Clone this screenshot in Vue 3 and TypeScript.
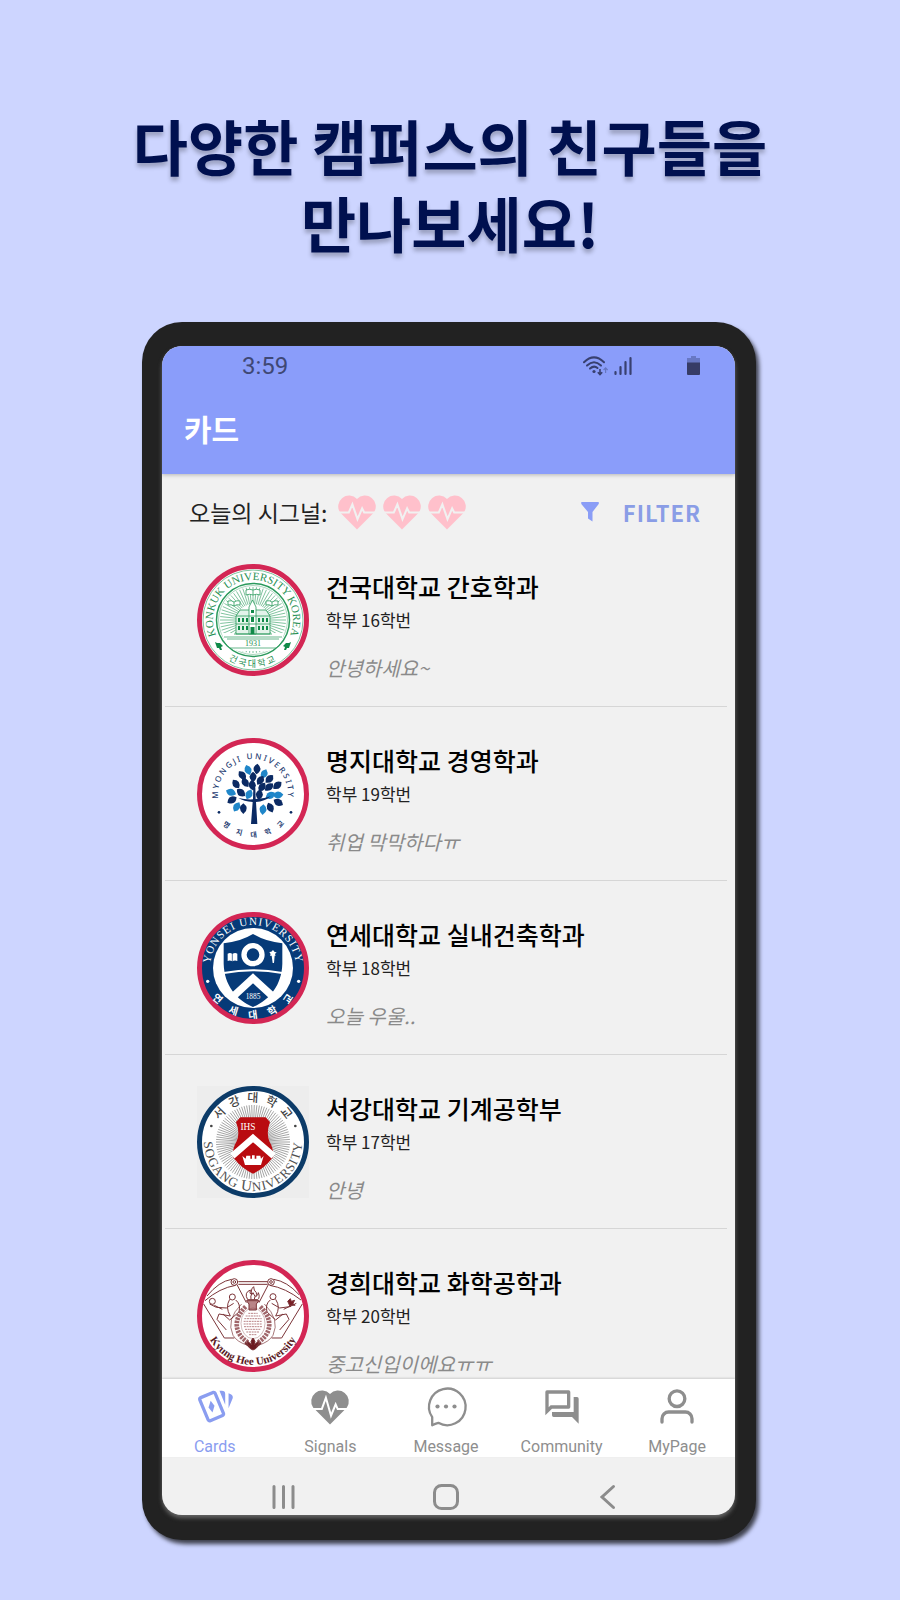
<script setup lang="ts">
interface Student {
  seal: 'konkuk' | 'myongji' | 'yonsei' | 'sogang' | 'kyunghee'
  name: string
  year: string
  status: string
}

const students: Student[] = [
  { seal: 'konkuk', name: '건국대학교 간호학과', year: '학부 16학번', status: '안녕하세요~' },
  { seal: 'myongji', name: '명지대학교 경영학과', year: '학부 19학번', status: '취업 막막하다ㅠ' },
  { seal: 'yonsei', name: '연세대학교 실내건축학과', year: '학부 18학번', status: '오늘 우울..' },
  { seal: 'sogang', name: '서강대학교 기계공학부', year: '학부 17학번', status: '안녕' },
  { seal: 'kyunghee', name: '경희대학교 화학공학과', year: '학부 20학번', status: '중고신입이에요ㅠㅠ' },
]

const tabs = ['Cards', 'Signals', 'Message', 'Community', 'MyPage']

// Full circles around the seal centre: one starts at the bottom and runs
// clockwise, the other starts at the top and runs counter-clockwise.
const topArc = (r: number) => `M56 ${56 + r}A${r} ${r} 0 1 1 56.01 ${56 + r}`
const bottomArc = (r: number) => `M56 ${56 - r}A${r} ${r} 0 1 0 56.01 ${56 - r}`

const rays = (count: number, inner: number, outer: number) =>
  Array.from({ length: count }, (_, i) => {
    const a = (i / count) * Math.PI * 2
    const c = Math.cos(a)
    const s = Math.sin(a)
    return `M${56 + c * inner} ${56 + s * inner}L${56 + c * outer} ${56 + s * outer}`
  }).join('')

const navy = '#0b2a63'
const sky = '#1f86c9'
const leaves: [number, number, number, string][] = [
  [205, 135, -20, sky], [232, 132, 5, navy], [253, 147, 25, sky], [188, 151, -40, navy],
  [220, 156, 0, navy], [242, 166, 35, navy], [269, 162, 45, navy], [169, 177, -35, navy],
  [197, 173, -35, navy], [218, 181, -10, navy], [247, 186, 35, navy], [268, 186, 50, navy],
  [293, 181, 50, navy], [154, 202, -70, sky], [184, 203, -50, navy], [208, 208, 25, sky],
  [239, 209, 10, navy], [272, 211, 60, sky], [295, 210, 85, sky], [157, 225, 60, navy],
  [171, 246, 30, sky], [191, 251, 0, navy], [250, 254, 5, sky], [272, 248, -25, navy],
  [296, 232, -60, navy],
]
</script>

<template>
  <main class="page">
    <h1 class="headline">다양한 캠퍼스의 친구들을<br />만나보세요!</h1>

    <div class="stage">
      <div class="phone">
        <div class="screen">
          <header class="app-header">
            <div class="status-bar">
              <span class="clock">3:59</span>
              <svg class="wifi" viewBox="0 0 25 20" aria-hidden="true">
                <g fill="none" stroke="#38406f" stroke-width="2" stroke-linecap="round">
                  <path d="M1 6.2Q11 -3.4 21 6.2" />
                  <path d="M4 9.6Q11 3 18 9.6" />
                  <path d="M7 12.6Q11 9 14.5 12" />
                </g>
                <circle cx="11" cy="15.5" r="1.6" fill="#38406f" />
                <path d="M17 13v5M14.8 16.2L17 18.6l2.2-2.4" fill="none" stroke="#38406f" stroke-width="1.6" />
                <path d="M22.6 17v-4.6M20.6 14l2-2.2 2 2.2" fill="none" stroke="#6676c0" stroke-width="1.2" />
              </svg>
              <svg class="signal" viewBox="0 0 18 20" aria-hidden="true">
                <path d="M1.5 18v-2M6.5 18v-7M11.5 18V6M16.5 18V2" stroke="#38406f" stroke-width="2.2" stroke-linecap="round" />
              </svg>
              <svg class="battery" viewBox="0 0 13 20" aria-hidden="true">
                <path d="M4 0h5v2h4v5H0V2h4z" fill="#6878c4" />
                <path d="M0 6.5h13V18a1 1 0 0 1-1 1H1a1 1 0 0 1-1-1z" fill="#363c66" />
              </svg>
            </div>
            <h2 class="title">카드</h2>
          </header>

          <div class="toolbar">
            <span class="today">오늘의 시그널:</span>
            <span class="hearts">
              <svg v-for="n in 3" :key="n" class="heart" viewBox="0.5 0.5 39 35" aria-hidden="true">
                <path d="M20 35L3.5 18.5A10.6 10.6 0 0 1 20 5.3 10.6 10.6 0 0 1 36.5 18.5z" fill="#ffc0cb" />
                <path d="M0 18.5H12L15.5 10.5 20.5 25 25 14.5 27 18.5H40" fill="none" stroke="#f1f1f1" stroke-width="2" />
              </svg>
            </span>
            <button class="filter" type="button">
              <svg viewBox="0 0 18 20" aria-hidden="true">
                <path d="M.5 0h17q.8 1.2 0 2.2L11.5 10v9.5L7 16.5V10L.5 2.2Q-.2 1 .5 0z" fill="#8a9df6" />
              </svg>
              <span>FILTER</span>
            </button>
          </div>

          <ul class="list">
            <li v-for="s in students" :key="s.seal" class="row">
              <svg v-if="s.seal === 'konkuk'" class="seal" viewBox="0 0 112 112">
                <defs>
                  <path id="konkuk-top" :d="topArc(40)" />
                  <path id="konkuk-bottom" :d="bottomArc(47)" />
                </defs>
                <circle cx="56" cy="56" r="53.5" fill="#fff" stroke="#d32654" stroke-width="5" />
                <g fill="none" stroke="#2a9a5c">
                  <circle cx="56" cy="56" r="50" stroke-width=".6" />
                  <circle cx="56" cy="56" r="36.5" stroke-width="1.5" />
                  <circle cx="56" cy="56" r="34.5" stroke-width=".4" />
                  <path :d="rays(60, 16, 33)" stroke-width=".6" />
                </g>
                <path d="M25 69H87Q84 84 71 87H41Q28 84 25 69z" fill="#fff" />
                <g fill="#fff" stroke="#2a9a5c" stroke-width=".8">
                  <path d="M49 26q3.5-1.5 7 0 3.5-1.5 7 0v5q-3.5-1.5-7 0-3.5-1.5-7 0zM56 26v5" />
                  <path d="M31 37q3.5-1 6 1 3-2 6-1v4q-3.5-1-6 1-3-2-6-1zM37 38v4" />
                  <path d="M69 37q3.5-1 6 1 3-2 6-1v4q-3.5-1-6 1-3-2-6-1zM75 38v4" />
                  <path d="M39 52L43 46H69L73 52V70H39z" fill="#e3f3ea" />
                  <path d="M52 70V43L55.5 36 59 43V70z" />
                  <path d="M39 52H73M37 70H75M39 60H73" />
                </g>
                <g fill="#0f8a48">
                  <path d="M41 54h2v4h-2zM45 54h2v4h-2zM49 54h2v4h-2zM61 54h2v4h-2zM65 54h2v4h-2zM69 54h2v4h-2zM41 62h2v4h-2zM45 62h2v4h-2zM49 62h2v4h-2zM61 62h2v4h-2zM65 62h2v4h-2zM69 62h2v4h-2z" />
                  <path d="M54 53h3v5h-3zM53.5 63h4v7h-4zM54 46h3v3h-3z" />
                  <path d="M18 78l2 1 3 0 3 3-2 1 1 3-2 0-1-2-2 0-1-3zM94 78l-2 1-3 0-3 3 2 1-1 3 2 0 1-2 2 0 1-3z" />
                </g>
                <path d="M27 73H85M30 75H82M33 84H79" stroke="#2a9a5c" stroke-width=".7" />
                <text x="56" y="82" class="serif mid" font-size="8" fill="#1f8f52">1931</text>
                <text class="serif mid" font-size="11" fill="#1f8f52">
                  <textPath href="#konkuk-top" startOffset="50%">KONKUK UNIVERSITY KOREA</textPath>
                </text>
                <text class="kr mid tracked-2" font-size="9" fill="#1f8f52">
                  <textPath href="#konkuk-bottom" startOffset="50%">건국대학교</textPath>
                </text>
              </svg>

              <svg v-else-if="s.seal === 'myongji'" class="seal" viewBox="0 0 112 112">
                <defs>
                  <path id="myongji-top" :d="topArc(35)" />
                  <path id="myongji-bottom" :d="bottomArc(43)" />
                </defs>
                <circle cx="56" cy="56" r="53.5" fill="#fff" stroke="#d32654" stroke-width="5" />
                <g transform="translate(-17.33 -13) scale(.3333)">
                  <path
                    v-for="(leaf, i) in leaves"
                    :key="i"
                    d="M0-16Q21-1 0 16Q-21-1 0-16z"
                    :transform="`translate(${leaf[0]} ${leaf[1]}) rotate(${leaf[2]})`"
                    :fill="leaf[3]"
                  />
                  <path d="M221 188h6l1 34q25 0 45-8-18 16-44 17l4 66h-19l5-66q-26-1-43-12 20 5 44 4z" fill="#0b2a63" />
                  <circle cx="118" cy="262" r="4" fill="#0b2a63" />
                  <circle cx="334" cy="262" r="4" fill="#0b2a63" />
                </g>
                <text class="sans mid tracked-2" font-size="8" font-weight="500" fill="#1c3a70">
                  <textPath href="#myongji-top" startOffset="50%">MYONGJI UNIVERSITY</textPath>
                </text>
                <text class="kr mid tracked-9" font-size="7" font-weight="700" fill="#1c3a70">
                  <textPath href="#myongji-bottom" startOffset="52%">명지대학교</textPath>
                </text>
              </svg>

              <svg v-else-if="s.seal === 'yonsei'" class="seal" viewBox="0 0 112 112">
                <defs>
                  <path id="yonsei-top" :d="topArc(43)" />
                  <path id="yonsei-bottom" :d="bottomArc(50)" />
                </defs>
                <circle cx="56" cy="56" r="53.5" fill="#063a78" stroke="#d32654" stroke-width="5" />
                <circle cx="56" cy="56" r="40" fill="#fff" />
                <g transform="translate(-17.33 -11.67) scale(.3333)">
                  <path d="M132 129Q182 124 220 101Q258 124 308 129V190C306 255 270 298 220 320C170 298 134 255 132 190z" fill="#063a78" />
                  <circle cx="220" cy="163" r="27" fill="#063a78" stroke="#fff" stroke-width="16" />
                  <path d="M132 218Q220 202 308 218" fill="none" stroke="#fff" stroke-width="6" />
                  <path d="M158 291L220 234L282 291" fill="none" stroke="#fff" stroke-width="22" />
                  <path d="M144 160q8-4 14 1 8-5 15-1v22q-8-3-15 1-8-4-14-1z" fill="#fff" />
                  <path d="M158 160v23" stroke="#063a78" stroke-width="2" />
                  <path d="M276 166h9l-2 22h-4zM280 149l5 6 6 1-5 5 2 5h-17l2-5-4-6 6-1z" fill="#fff" />
                  <circle cx="84" cy="243" r="5" fill="#fff" />
                  <circle cx="357" cy="243" r="5" fill="#fff" />
                  <text x="220" y="297" class="serif mid" font-size="22" fill="#fff">1885</text>
                </g>
                <text class="serif mid tracked-1" font-size="11" fill="#fff">
                  <textPath href="#yonsei-top" startOffset="50%">YONSEI UNIVERSITY</textPath>
                </text>
                <text class="kr mid tracked-12" font-size="10" font-weight="700" fill="#fff">
                  <textPath href="#yonsei-bottom" startOffset="52%">연세대학교</textPath>
                </text>
              </svg>

              <svg v-else-if="s.seal === 'sogang'" class="seal boxed" viewBox="0 0 112 112">
                <defs>
                  <path id="sogang-top" :d="topArc(40)" />
                  <path id="sogang-bottom" :d="bottomArc(49)" />
                </defs>
                <circle cx="56" cy="56" r="53.5" fill="#fff" stroke="#0c3b68" stroke-width="5" />
                <path :d="rays(90, 16, 37)" stroke="#8d8d8d" stroke-width=".8" />
                <g transform="translate(-17.33 -10.67) scale(.3333)">
                  <path d="M182 126H258L271 140Q259 172 269 198Q283 222 280 246Q254 280 220 295Q186 280 160 246Q157 222 171 198Q182 172 169 140z" fill="#b90b10" />
                  <path d="M158 242L220 188L282 242" fill="none" stroke="#fff" stroke-width="19" />
                  <path d="M188 242l10 8 2-9h12v9h5v-10h8v10h5v-9h12l2 9 8-8-8 27h-48z" fill="#fff" />
                  <text x="205" y="164" class="serif mid" font-size="28" fill="#fff">IHS</text>
                  <circle cx="95" cy="152" r="4" fill="#444" />
                  <circle cx="347" cy="152" r="4" fill="#444" />
                </g>
                <text class="kr mid tracked-6" font-size="12" font-weight="500" fill="#444">
                  <textPath href="#sogang-top" startOffset="51%">서강대학교</textPath>
                </text>
                <text class="serif mid tracked-1" font-size="13" fill="#505050">
                  <textPath href="#sogang-bottom" startOffset="50%">SOGANG <tspan font-size="15">U</tspan>NIVERSITY</textPath>
                </text>
              </svg>

              <svg v-else class="seal" viewBox="0 0 112 112">
                <defs>
                  <path id="kyunghee-bottom" :d="bottomArc(49)" />
                </defs>
                <circle cx="56" cy="56" r="53.5" fill="#fff" stroke="#d32654" stroke-width="5" />
                <g transform="translate(-17.33 -9.33) scale(.3333)" fill="none" stroke="#7a3337" stroke-width="3">
                  <path d="M176 93H264M176 101H264" />
                  <circle cx="164" cy="94" r="10" />
                  <circle cx="164" cy="94" r="4" />
                  <circle cx="274" cy="94" r="10" />
                  <circle cx="274" cy="94" r="4" />
                  <path d="M156 86Q118 92 82 136M168 104Q120 112 76 150M72 160L134 262H164M282 86Q322 92 358 132M270 104Q318 112 364 148M368 160L306 262H276" />
                  <path d="M172 102L200 156M266 102L238 156" />
                  <circle cx="98" cy="152" r="9" />
                  <path d="M90 160L110 170 140 172 162 158M104 164L128 176" />
                  <circle cx="158" cy="139" r="9" />
                  <path d="M150 146Q136 170 152 196L118 190L112 206L140 238M168 148Q184 160 178 184L150 208L130 190" />
                  <path d="M324 152l8-8 3 8 10-3-5 9 6 6-11-1-4 6-3-9z" fill="#7a1f25" />
                  <path d="M350 158L330 168 300 172 276 158M336 164L312 176" />
                  <circle cx="280" cy="138" r="9" />
                  <path d="M288 146Q304 170 288 196L320 190L328 206L300 238M272 148Q256 160 262 184L288 208L310 190" />
                  <path d="M200 150H238L230 160V178H208V160z" fill="#b98487" />
                  <path d="M204 147Q192 126 212 118Q208 130 216 132Q212 116 222 108Q222 120 230 126Q232 132 228 138Q236 134 236 126Q242 140 234 147z" />
                  <path d="M214 146Q210 136 220 126Q230 138 224 146" />
                  <ellipse cx="220" cy="218" rx="36" ry="46" stroke-width="1" />
                  <path d="M198 168Q160 206 176 244Q184 262 206 276M242 168Q280 206 264 244Q256 262 234 276" stroke-width="14" stroke-dasharray="7 3" stroke="#a0666a" />
                  <path d="M186 160Q138 206 160 254Q172 274 204 284M254 160Q302 206 280 254Q268 274 236 284" stroke-width="2" />
                  <path d="M206 188H234M198 196H242M194 204H246M192 212H248M192 220H248M193 228H247M196 236H244M200 244H240M208 252H232" stroke-width="3" stroke-dasharray="6 2" stroke="#b98487" />
                  <path d="M220 262q10 10 4 20l12-10q4 14-8 22l-8 4-8-4q-12-8-8-22l12 10q-6-10 4-20z" fill="#6b1a20" />
                  <path d="M196 276l14 12M244 276l-14 12" stroke-width="6" />
                </g>
                <text class="serif mid" font-size="11" font-weight="700" fill="#5a1a1e">
                  <textPath href="#kyunghee-bottom" startOffset="50%">Kyung Hee University</textPath>
                </text>
              </svg>

              <div class="info">
                <h3 class="name">{{ s.name }}</h3>
                <p class="year">{{ s.year }}</p>
                <p class="status">{{ s.status }}</p>
              </div>
            </li>
          </ul>

          <nav class="tabs" aria-label="Main">
            <button v-for="(tab, i) in tabs" :key="tab" type="button" class="tab" :class="{ active: i === 0 }">
              <svg v-if="tab === 'Cards'" viewBox="0 0 24 24" fill="currentColor" aria-hidden="true">
                <path d="M11.19 2.25c-.26 0-.52.06-.77.15L3.06 5.45c-1.02.42-1.51 1.59-1.09 2.6L6.93 20c.31.77 1.04 1.23 1.81 1.25.26 0 .53-.03.8-.15l7.37-3.05c.74-.31 1.2-1.05 1.22-1.8.01-.25-.04-.54-.13-.8L13 3.5c-.29-.77-1.03-1.24-1.81-1.25m3.48 0l3.45 8.35V4.25a2 2 0 0 0-2-2m4.01 1.54v9.03l2.43-5.86c.41-1.02-.06-2.18-1.09-2.6M11.19 4.22l4.98 12.02-7.39 3.06L3.8 7.29z" />
                <path d="M9.4 8.3l2.3 3-1.2 4-2.4-3z" />
              </svg>
              <svg v-else-if="tab === 'Signals'" viewBox="0.5 1 39 39" aria-hidden="true">
                <path d="M20 37.5L3.5 21A10.6 10.6 0 0 1 20 7.8 10.6 10.6 0 0 1 36.5 21z" fill="currentColor" />
                <path d="M0 22.5H12L16 11.5 21 29 25.5 18 27.5 22.5H40" fill="none" stroke="#fff" stroke-width="2" />
              </svg>
              <svg v-else-if="tab === 'Message'" viewBox="3 0 40 40" fill="none" aria-hidden="true">
                <path d="M10.2 38.3V30.2A18.3 18.3 0 1 1 16.3 35.8Q13.2 36.6 10.2 38.3z" stroke="currentColor" stroke-width="2.3" stroke-linejoin="round" transform="translate(-1 0)" />
                <g fill="currentColor">
                  <circle cx="14.5" cy="19.5" r="2.1" />
                  <circle cx="23" cy="19.5" r="2.1" />
                  <circle cx="31.5" cy="19.5" r="2.1" />
                </g>
              </svg>
              <svg v-else-if="tab === 'Community'" viewBox="0 0 24 24" fill="currentColor" aria-hidden="true">
                <path d="M15 4v7H5.17L4 12.17V4zm1-2H3a1 1 0 0 0-1 1v14l4-4h10a1 1 0 0 0 1-1V3a1 1 0 0 0-1-1m5 4h-2v9H6v2a1 1 0 0 0 1 1h11l4 4V7a1 1 0 0 0-1-1" />
              </svg>
              <svg v-else viewBox="0 0 24 24" fill="none" stroke="currentColor" stroke-width="2" stroke-linecap="round" aria-hidden="true">
                <path d="M21 21v-2a4 4 0 0 0-4-4H7a4 4 0 0 0-4 4v2" />
                <circle cx="12" cy="7" r="4.7" />
              </svg>
              <span>{{ tab }}</span>
            </button>
          </nav>

          <div class="system-nav">
            <button type="button" aria-label="Recent apps">
              <svg viewBox="0 0 26 26"><path d="M3 2.5v21M12.5 2.5v21M22 2.5v21" /></svg>
            </button>
            <button type="button" aria-label="Home">
              <svg viewBox="0 0 26 26"><rect x="1.5" y="1.5" width="23" height="23" rx="7" /></svg>
            </button>
            <button type="button" aria-label="Back">
              <svg viewBox="0 0 26 26"><path d="M18.5 2.5L7 13l11.5 10.5" /></svg>
            </button>
          </div>
        </div>
      </div>
    </div>
  </main>
</template>

<style>
body {
  margin: 0;
  background: #cdd5ff;
}
</style>

<style scoped>
* {
  box-sizing: border-box;
}

.page {
  min-height: 100vh;
  padding: 106px 0 58px;
  background: #cdd5ff;
  font-family: 'Noto Sans CJK KR', 'Noto Sans', sans-serif;
}

.headline {
  margin: 0 0 62px;
  color: #00104f;
  font-size: 60px;
  font-weight: 700;
  line-height: 77px;
  text-align: center;
  text-shadow: 0 4px 4px rgba(0, 0, 0, 0.25);
}

.stage {
  padding-right: 2px;
}

.phone {
  width: 614px;
  max-width: 100%;
  margin: 0 auto;
  padding: 24px 21px 25px 20px;
  border-radius: 40px;
  background: #222;
  box-shadow: 3px 4px 4px rgba(0, 0, 0, 0.7);
}

.screen {
  display: flex;
  flex-direction: column;
  aspect-ratio: 573 / 1169;
  overflow: hidden;
  border-radius: 20px;
  background: #f1f1f1;
  box-shadow: 0 3px 4px #666;
}

.app-header {
  flex: none;
  z-index: 1;
  background: #8a9dfa;
  box-shadow: 0 1px 4px rgba(0, 0, 0, 0.25);
}

.status-bar {
  display: flex;
  align-items: center;
  height: 40px;
  padding: 0 35px 0 80px;
}

.clock {
  flex: 1;
  color: #3f4875;
  font: 24px/40px Roboto, sans-serif;
}

.wifi {
  width: 25px;
  height: 20px;
}

.signal {
  width: 18px;
  height: 20px;
  margin: 0 55px 0 6px;
}

.battery {
  width: 13px;
  height: 20px;
}

.title {
  margin: 0;
  padding: 0 0 4px 22px;
  color: #fff;
  font-size: 30px;
  font-weight: 700;
  line-height: 84px;
}

.toolbar {
  display: flex;
  flex: none;
  align-items: center;
  height: 59px;
  padding: 16px 34px 0 27px;
}

.today {
  width: 148px;
  color: #222;
  font-size: 23px;
  white-space: nowrap;
}

.hearts {
  display: flex;
  flex: 1;
  gap: 5px;
}

.heart {
  width: 40px;
  height: 36px;
}

.filter {
  display: flex;
  align-items: center;
  gap: 24px;
  padding: 0;
  border: 0;
  background: none;
  color: #8a9de6;
  font: 700 22px/32px 'Noto Sans CJK KR', sans-serif;
  letter-spacing: 1px;
}

.filter svg {
  width: 18px;
  height: 20px;
}

.list {
  flex: 1;
  min-height: 0;
  margin: 0 8px 0 3px;
  padding: 0;
  overflow: hidden;
  list-style: none;
}

.row {
  display: flex;
  gap: 17px;
  padding: 31px 0 26px 32px;
  border-bottom: 1px solid #d6d6d6;
}

.seal {
  flex: none;
  width: 112px;
  height: 112px;
}

.boxed {
  background: #ededed;
}

.serif {
  font-family: 'Liberation Serif', serif;
}

.sans {
  font-family: 'Noto Sans', sans-serif;
}

.kr {
  font-family: 'Noto Sans CJK KR', sans-serif;
}

.mid {
  text-anchor: middle;
}

.tracked-1 {
  letter-spacing: 1px;
}

.tracked-2 {
  letter-spacing: 2px;
}

.tracked-6 {
  letter-spacing: 6px;
}

.tracked-9 {
  letter-spacing: 9px;
}

.tracked-12 {
  letter-spacing: 12px;
}

.info {
  padding-top: 4px;
  white-space: nowrap;
}

.name {
  margin: 0;
  color: #000;
  font-size: 25px;
  font-weight: 500;
  line-height: 36px;
}

.year {
  margin: 4px 0 24px;
  color: #222;
  font-size: 17px;
  line-height: 24px;
}

.status {
  margin: 0;
  color: #8a8a8a;
  font-size: 20px;
  font-style: italic;
  line-height: 24px;
}

.tabs {
  display: flex;
  flex: none;
  z-index: 1;
  background: #fff;
  box-shadow: 0 -1px 2px rgba(0, 0, 0, 0.15);
}

.tab {
  display: flex;
  flex: 1;
  flex-direction: column;
  align-items: center;
  gap: 10px;
  padding: 8px 0 0;
  border: 0;
  background: none;
  color: #8e8e8e;
  font: 16px/20px Roboto, sans-serif;
}

.tab:first-child {
  margin-left: -5px;
}

.tab.active {
  color: #8a9df0;
}

.tab svg {
  width: 40px;
  height: 40px;
  overflow: visible;
}

.system-nav {
  display: flex;
  flex: none;
  gap: 136px;
  justify-content: center;
  height: 58px;
  padding: 27px 5px 0 0;
}

.system-nav button {
  width: 26px;
  height: 26px;
  padding: 0;
  border: 0;
  background: none;
}

.system-nav svg {
  display: block;
  width: 26px;
  height: 26px;
  fill: none;
  stroke: #8c8c8c;
  stroke-width: 3;
  stroke-linecap: round;
}
</style>
